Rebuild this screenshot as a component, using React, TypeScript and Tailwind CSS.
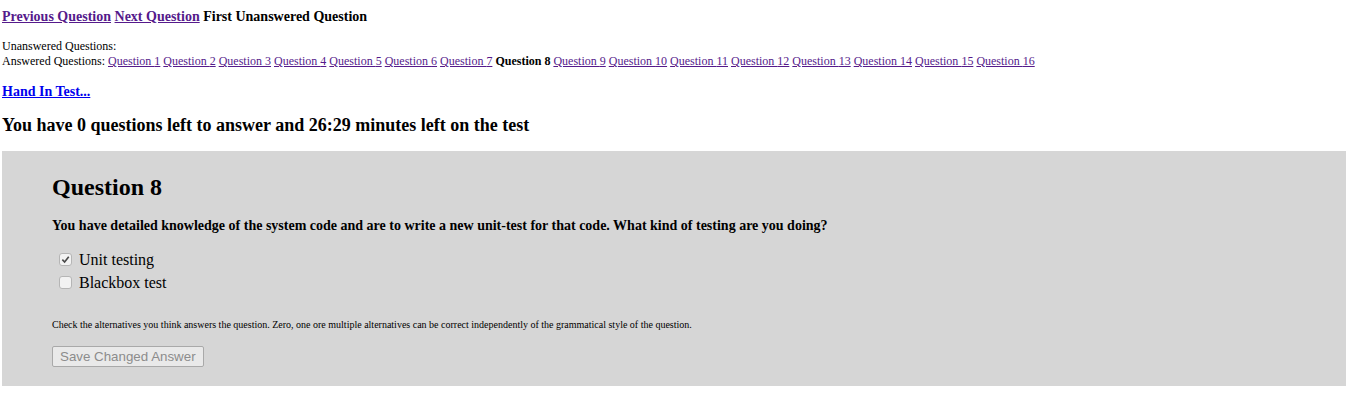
const answered = Array.from({ length: 16 }, (_, i) => i + 1);

function Box({ checked }: { checked?: boolean }) {
  return (
    <span className="w-[13px] h-[13px] rounded-[3px] border border-[#b5b5b5] bg-[#f2f2f2] flex items-center justify-center shrink-0">
      {checked && (
        <svg viewBox="0 0 10 10" className="w-[9px] h-[9px]">
          <path d="M1.5 5.2 L4 7.8 L8.6 2" fill="none" stroke="#4a4a4a" strokeWidth="1.8" />
        </svg>
      )}
    </span>
  );
}

export default function App() {
  return (
    <div className="px-[2px] pt-[8px] font-['Liberation_Serif',serif] text-black bg-white">
      <div className="text-[14px] font-bold leading-[17px]">
        <a href="#" className="underline text-[#551a8b]">Previous Question</a>{" "}
        <a href="#" className="underline text-[#551a8b]">Next Question</a>{" "}
        <span>First Unanswered Question</span>
      </div>
      <div className="mt-[14px] text-[12px] leading-[15px]">
        <div>Unanswered Questions:</div>
        <div>
          Answered Questions:{" "}
          {answered.map((n) =>
            n === 8 ? (
              <span key={n}>
                <b>Question 8</b>{" "}
              </span>
            ) : (
              <span key={n}>
                <a href="#" className="underline text-[#551a8b]">Question {n}</a>{" "}
              </span>
            )
          )}
        </div>
      </div>
      <div className="mt-[14px] text-[14px] font-bold leading-[17px]">
        <a href="#" className="underline text-[#0000ee]">Hand In Test...</a>
      </div>
      <h2 className="mt-[14px] text-[18px] font-bold leading-[22px]">
        You have 0 questions left to answer and 26:29 minutes left on the test
      </h2>
      <div className="mt-[15px] w-[1344px] bg-[#d6d6d6] pl-[50px] pt-[22px] pb-[18px]">
        <h1 className="text-[24px] font-bold leading-[28px]">Question 8</h1>
        <p className="mt-[16px] text-[14px] font-bold leading-[17px]">
          You have detailed knowledge of the system code and are to write a new unit-test for that code. What kind of testing are you doing?
        </p>
        <div className="mt-[14px] text-[16px] leading-[23px]">
          <label className="flex items-center gap-[7px] pl-[7px]">
            <Box checked />
            <span>Unit testing</span>
          </label>
          <label className="flex items-center gap-[7px] pl-[7px]">
            <Box />
            <span>Blackbox test</span>
          </label>
        </div>
        <p className="mt-[25px] text-[10px] leading-[12px]">
          Check the alternatives you think answers the question. Zero, one ore multiple alternatives can be correct independently of the grammatical style of the question.
        </p>
        <button
          disabled
          className="mt-[15px] h-[21px] px-[7px] border border-[#a9a9a9] rounded-[2px] bg-[#e9e9e9] text-[13.33px] text-[#8c8c8c] font-['Liberation_Sans',sans-serif] leading-[19px]"
        >
          Save Changed Answer
        </button>
      </div>
    </div>
  );
}
